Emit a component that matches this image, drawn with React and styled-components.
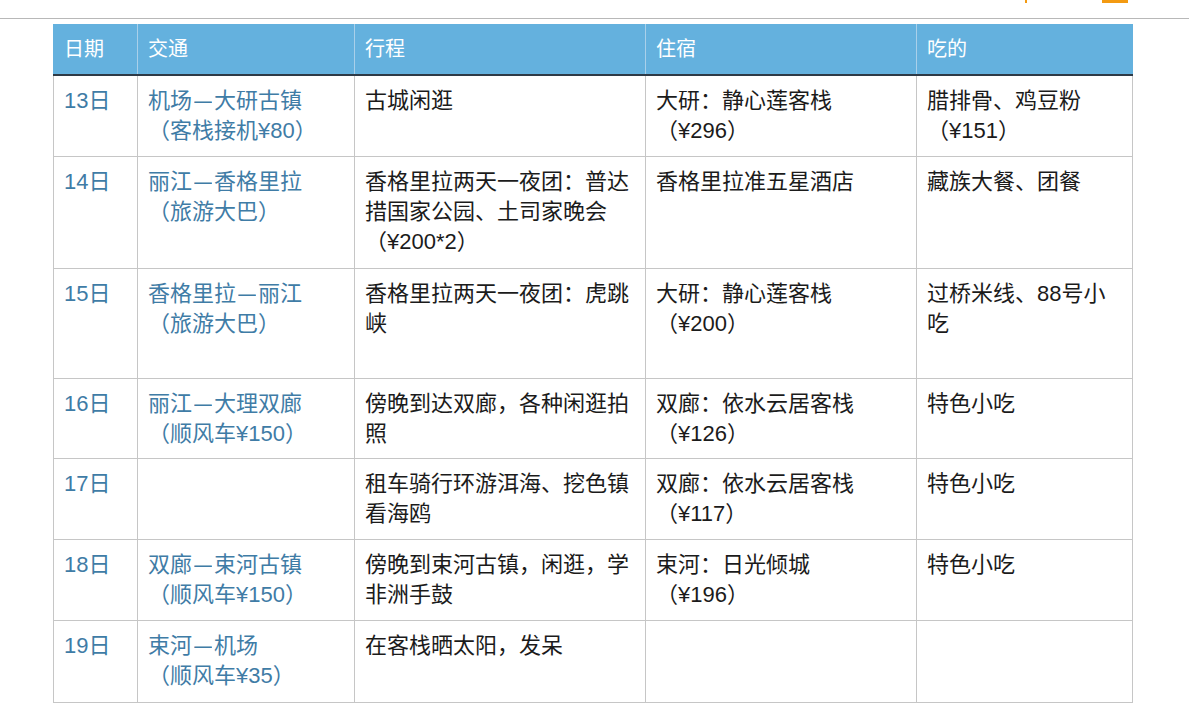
import React from "react";
import styled, { createGlobalStyle } from "styled-components";

const Global = createGlobalStyle`
  html, body { margin: 0; padding: 0; background: #ffffff; }
  body { font-family: "Liberation Sans", "Noto Sans CJK SC", sans-serif; }
`;

const Page = styled.div`
  width: 1189px;
  height: 704px;
  overflow: hidden;
  background: #fff;
`;

const TopStrip = styled.div`
  height: 18px;
  border-bottom: 1px solid #b8b8b8;
  display: flex;
  justify-content: flex-end;
  align-items: flex-start;
  gap: 75px;
  padding-right: 61px;
`;

const Mark = styled.span`
  display: block;
  width: ${(p) => p.$w}px;
  height: 3px;
  background: #f39a12;
`;

const Wrap = styled.div`
  padding: 5px 0 0 53px;
`;

const Table = styled.table`
  border-collapse: collapse;
  table-layout: fixed;
  width: 1079px;
  font-size: 22px;
  line-height: 30px;
`;

const Th = styled.th`
  background: #64b1de;
  color: #ffffff;
  font-weight: 400;
  font-size: 20px;
  text-align: left;
  padding: 10px 10px;
  height: 30px;
  line-height: 30px;
  border-left: 1px solid #a9d0ea;
  border-bottom: 2px solid #2e3a46;
  &:first-child { border-left: 1px solid #64b1de; }
  &:last-child { border-right: 1px solid #64b1de; }
`;

const Tr = styled.tr`
  height: ${(p) => p.$h}px;
`;

const Td = styled.td`
  vertical-align: top;
  padding: 10px 10px 9px;
  border: 1px solid #c6c6c6;
  color: ${(p) => (p.$accent ? "#3f7ca6" : "#1b1b1b")};
  ${(p) => p.$dark && "border-left: 1px solid #1f1f1f;"}
`;

const LineBox = styled.div`
  height: 30px;
  line-height: 30px;
  white-space: nowrap;
`;

const Dash = styled.span`
  display: inline-block;
  width: 22px;
  text-align: center;
  font-family: "Liberation Sans", sans-serif;
  transform: scaleX(0.8);
`;

const rows = [
  { h: 81, d: "13日", t: [["机场", "大研古镇"], "（客栈接机¥80）"], p: ["古城闲逛"], s: ["大研：静心莲客栈", "（¥296）"], f: ["腊排骨、鸡豆粉", "（¥151）"] },
  { h: 112, d: "14日", t: [["丽江", "香格里拉"], "（旅游大巴）"], p: ["香格里拉两天一夜团：普达", "措国家公园、土司家晚会", "（¥200*2）"], s: ["香格里拉准五星酒店"], f: ["藏族大餐、团餐"] },
  { h: 110, d: "15日", t: [["香格里拉", "丽江"], "（旅游大巴）"], p: ["香格里拉两天一夜团：虎跳", "峡"], s: ["大研：静心莲客栈", "（¥200）"], f: ["过桥米线、88号小", "吃"] },
  { h: 80, d: "16日", t: [["丽江", "大理双廊"], "（顺风车¥150）"], p: ["傍晚到达双廊，各种闲逛拍", "照"], s: ["双廊：依水云居客栈", "（¥126）"], f: ["特色小吃"] },
  { h: 81, d: "17日", t: [], p: ["租车骑行环游洱海、挖色镇", "看海鸥"], s: ["双廊：依水云居客栈", "（¥117）"], f: ["特色小吃"] },
  { h: 81, d: "18日", t: [["双廊", "束河古镇"], "（顺风车¥150）"], p: ["傍晚到束河古镇，闲逛，学", "非洲手鼓"], s: ["束河：日光倾城", "（¥196）"], f: ["特色小吃"] },
  { h: 82, d: "19日", t: [["束河", "机场"], "（顺风车¥35）"], p: ["在客栈晒太阳，发呆"], s: [], f: [] },
];

const Line = ({ value }) => (
  <LineBox>
    {Array.isArray(value) ? (
      <>
        {value[0]}
        <Dash>—</Dash>
        {value[1]}
      </>
    ) : (
      value
    )}
  </LineBox>
);

const Lines = ({ items }) => items.map((l, i) => <Line key={i} value={l} />);

export default function App() {
  return (
    <Page>
      <Global />
      <TopStrip>
        <Mark $w={2} />
        <Mark $w={26} />
      </TopStrip>
      <Wrap>
        <Table>
          <colgroup>
            <col style={{ width: 84 }} />
            <col style={{ width: 217 }} />
            <col style={{ width: 291 }} />
            <col style={{ width: 271 }} />
            <col style={{ width: 216 }} />
          </colgroup>
          <thead>
            <tr>
              <Th>日期</Th>
              <Th>交通</Th>
              <Th>行程</Th>
              <Th>住宿</Th>
              <Th>吃的</Th>
            </tr>
          </thead>
          <tbody>
            {rows.map((r) => (
              <Tr key={r.d} $h={r.h}>
                <Td $accent><Line value={r.d} /></Td>
                <Td $accent><Lines items={r.t} /></Td>
                <Td $dark><Lines items={r.p} /></Td>
                <Td><Lines items={r.s} /></Td>
                <Td><Lines items={r.f} /></Td>
              </Tr>
            ))}
          </tbody>
        </Table>
      </Wrap>
    </Page>
  );
}
